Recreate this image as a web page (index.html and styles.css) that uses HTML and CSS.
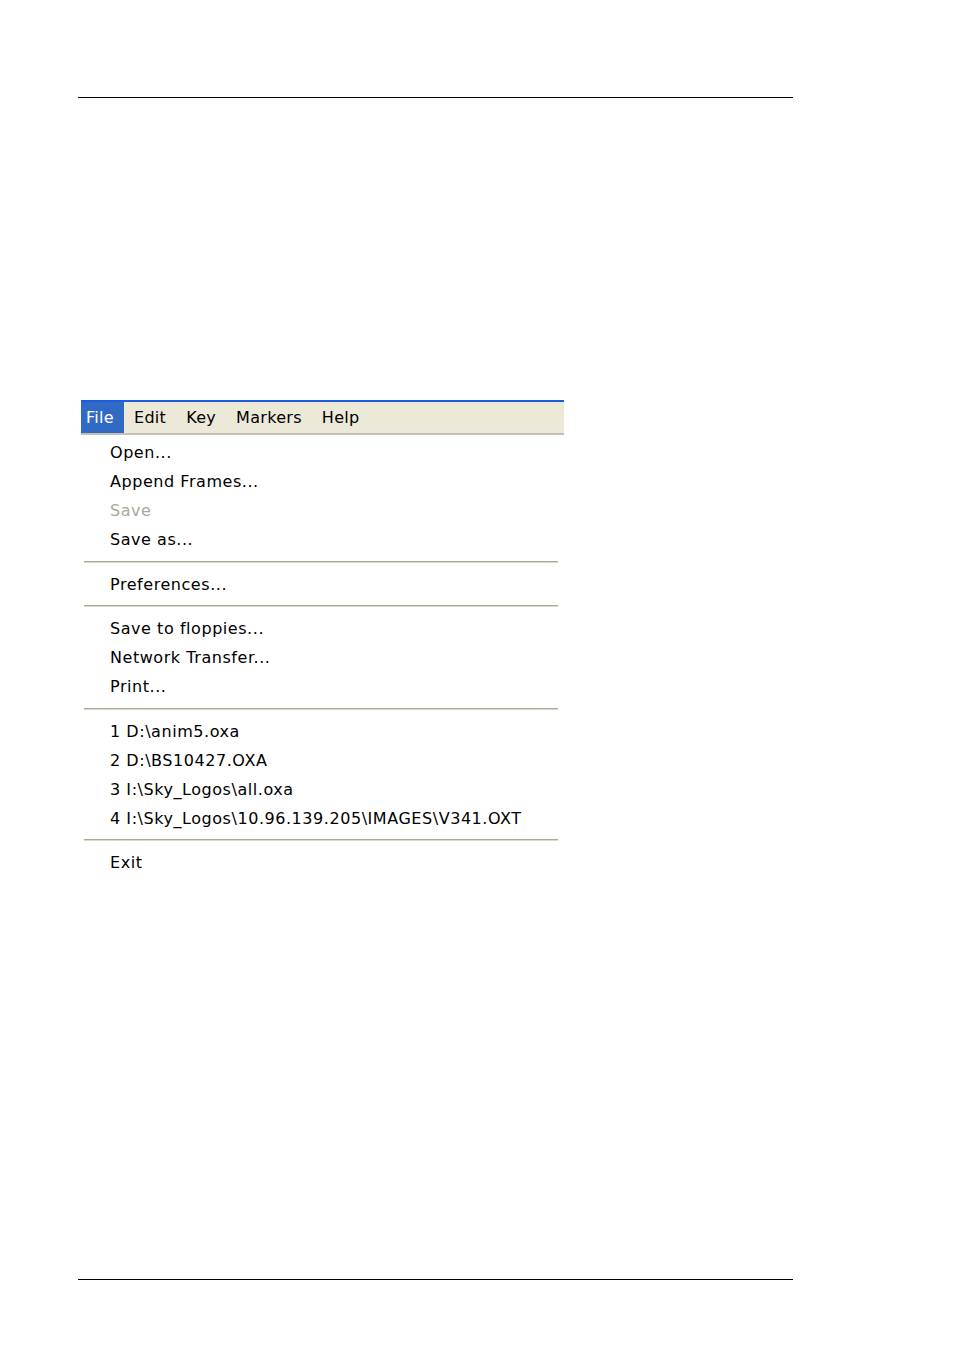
FILE: index.html
```html
<!DOCTYPE html>
<html lang="en">

<head>
    <meta charset="UTF-8">
    <meta name="viewport" content="width=device-width, initial-scale=1.0">
    <title>File Menu</title>
    <link rel="stylesheet" href="styles.css">
</head>

<body>

    <div class="page">
        <hr class="rule">

        <!-- Menu bar with the File menu opened -->
        <div class="window">
            <div class="menu-bar">
                <span class="menu-title active">File</span>
                <span class="menu-title">Edit</span>
                <span class="menu-title">Key</span>
                <span class="menu-title">Markers</span>
                <span class="menu-title">Help</span>
            </div>

            <div class="dropdown">
                <div class="item">Open...</div>
                <div class="item">Append Frames...</div>
                <div class="item disabled">Save</div>
                <div class="item">Save as...</div>
                <div class="separator"></div>
                <div class="item">Preferences...</div>
                <div class="separator"></div>
                <div class="item">Save to floppies...</div>
                <div class="item">Network Transfer...</div>
                <div class="item">Print...</div>
                <div class="separator"></div>
                <div class="item">1 D:\anim5.oxa</div>
                <div class="item">2 D:\BS10427.OXA</div>
                <div class="item">3 I:\Sky_Logos\all.oxa</div>
                <div class="item">4 I:\Sky_Logos\10.96.139.205\IMAGES\V341.OXT</div>
                <div class="separator"></div>
                <div class="item">Exit</div>
            </div>
        </div>

        <hr class="rule bottom">
    </div>

</body>

</html>
```

FILE: styles.css
```css
body {
    margin: 0;
    padding: 0;
    background-color: #fff;
    font-family: "DejaVu Sans", Tahoma, sans-serif;
    color: #000;
}

.page {
    padding-top: 97px;
}

/* Thin page rules at top and bottom */
.rule {
    margin: 0 0 0 78px;
    width: 715px;
    height: 0;
    border: none;
    border-top: 1px solid #000;
}

.rule.bottom {
    margin-top: 402px;
}

.window {
    margin: 302px 0 0 81px;
    width: 483px;
}

/* Menu bar */
.menu-bar {
    display: flex;
    height: 31px;
    background-color: #ece9d8;
    border-top: 2px solid #1b5ce0;
    border-bottom: 2px solid #c4c1b3;
    font-size: 16px;
    letter-spacing: 0.3px;
}

.menu-title {
    display: flex;
    align-items: center;
    padding: 0 10px;
}

.menu-title.active {
    background-color: #316ac5;
    color: #fff;
    padding: 0 10px 0 5px;
}

/* Dropdown */
.dropdown {
    padding-top: 3px;
    width: 474px;
    margin-left: 3px;
    font-size: 16px;
    letter-spacing: 0.55px;
}

.item {
    height: 29px;
    line-height: 29px;
    padding-left: 26px;
    white-space: nowrap;
}

.item.disabled {
    color: #aca899;
}

.separator {
    height: 15.5px;
    display: flex;
    align-items: center;
}

.separator::before {
    content: "";
    display: block;
    width: 100%;
    height: 1px;
    background-color: #aca899;
    border-bottom: 1px solid #dcd9cc;
}
```
